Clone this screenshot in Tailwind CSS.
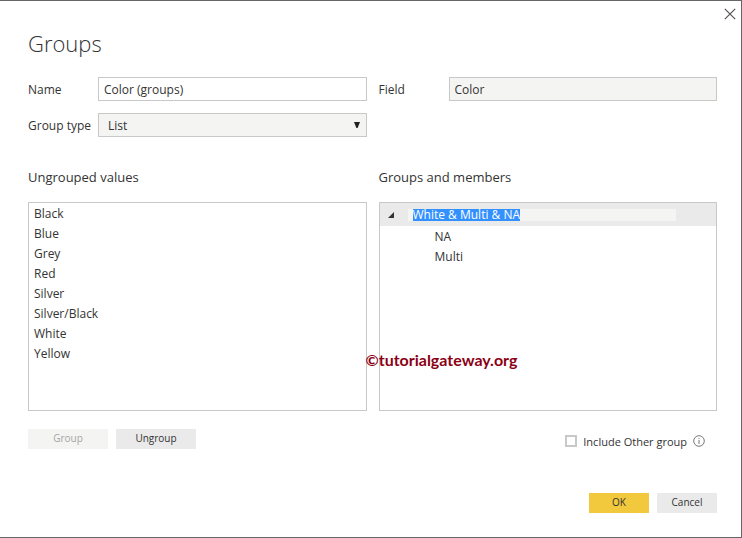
<!DOCTYPE html>
<html lang="en">
<head>
    <meta charset="UTF-8">
    <meta name="viewport" content="width=device-width, initial-scale=1.0">
    <title>Groups</title>
    <script src="https://cdn.jsdelivr.net/npm/@tailwindcss/browser@4"></script>
</head>
<body class="bg-white font-['Open_Sans','Noto_Sans',sans-serif] text-xs text-[#333333]">
    <div class="relative min-h-screen flex flex-col border-t border-r border-b border-[#666666] pt-6 pb-6 pl-7 pr-6">
        <button type="button" aria-label="Close" class="absolute top-[7px] right-[5px] w-3 h-3">
            <svg viewBox="0 0 12 12" class="w-3 h-3" fill="none" stroke="#5a5055" stroke-width="1.2">
                <path d="M0.8 0.8L11.2 11.2M11.2 0.8L0.8 11.2"/>
            </svg>
        </button>

        <h1 class="text-[22px] leading-9 font-light">Groups</h1>

        <form id="groupsForm" class="flex-1 flex flex-col">
            <div class="grid grid-cols-2 gap-3 mt-4">
                <div class="flex items-center">
                    <label for="name" class="w-[70px] shrink-0 pt-0.5">Name</label>
                    <input type="text" id="name" name="name" value="Color (groups)"
                           class="flex-1 min-w-0 h-6 px-[5px] border border-[#c8c8c8] bg-white outline-none">
                </div>
                <div class="flex items-center">
                    <label for="field" class="w-[70px] shrink-0 pt-0.5">Field</label>
                    <input type="text" id="field" name="field" value="Color" readonly
                           class="flex-1 min-w-0 h-6 px-[5px] border border-[#c8c8c8] bg-[#f4f4f2] outline-none">
                </div>
                <div class="flex items-center">
                    <label for="groupType" class="w-[70px] shrink-0 pt-0.5 whitespace-nowrap">Group type</label>
                    <div class="relative flex-1">
                        <select id="groupType" name="groupType"
                                class="block w-full h-6 pt-0.5 pl-[9px] pr-6 appearance-none border border-[#c8c8c8] bg-[#f4f4f2] outline-none">
                            <option>List</option>
                            <option>Bin</option>
                        </select>
                        <svg viewBox="0 0 6 6" class="absolute right-[7px] top-[9px] w-[6px] h-[6px] pointer-events-none" fill="#222222">
                            <path d="M0 0H6L3.6 6H2.4Z"/>
                        </svg>
                    </div>
                </div>
            </div>

            <div class="flex-1 grid grid-cols-2 grid-rows-[auto_1fr] gap-x-3 gap-y-[13px] mt-7">
                <h2 class="text-[13px] leading-6">Ungrouped values</h2>
                <h2 class="text-[13px] leading-6">Groups and members</h2>

                <ul class="border border-[#c8c8c8] px-[5px] py-px leading-5">
                    <li>Black</li>
                    <li>Blue</li>
                    <li>Grey</li>
                    <li>Red</li>
                    <li>Silver</li>
                    <li>Silver/Black</li>
                    <li>White</li>
                    <li>Yellow</li>
                </ul>

                <div class="relative border border-[#c8c8c8]">
                    <div class="flex items-center h-[23px] pl-2 pr-10 bg-[#eaeaea]">
                        <svg viewBox="0 0 6 6" class="w-[6px] h-[6px] mr-[14px]" fill="#333333">
                            <path d="M6 0V6H0Z"/>
                        </svg>
                        <div class="flex-1 h-3 pl-[5px] bg-[#f4f4f2] leading-3">
                            <span class="inline-block h-3 bg-[#3390ff] text-white">White &amp; Multi &amp; NA</span>
                        </div>
                    </div>
                    <ul class="pl-[55px] pt-px leading-5">
                        <li>NA</li>
                        <li>Multi</li>
                    </ul>
                    <p class="absolute -left-[14px] bottom-10 text-base leading-5 font-bold text-[#8b0014] font-[Lato,sans-serif]">©tutorialgateway.org</p>
                </div>
            </div>

            <div class="flex items-start justify-between mt-[18px]">
                <div class="flex gap-2 text-[10px]">
                    <button type="button" disabled class="w-20 h-5 bg-[#f4f4f2] text-[#a6a6a6]">Group</button>
                    <button type="button" class="w-20 h-5 bg-[#eaeaea]">Ungroup</button>
                </div>
                <div class="flex items-center h-6 pr-3">
                    <input type="checkbox" id="includeOther" name="includeOther"
                           class="appearance-none w-3 h-3 mr-[6px] border-2 border-[#c8c8c8] bg-white">
                    <label for="includeOther" class="text-[11px] pt-0.5">Include Other group</label>
                    <svg viewBox="0 0 12 12" class="w-3 h-3 ml-[6px]" fill="none" stroke="#555555" stroke-width="0.8">
                        <circle cx="6" cy="6" r="5.3"/>
                        <path d="M6 5V9M6 3V4"/>
                    </svg>
                </div>
            </div>

            <div class="flex justify-end gap-2 mt-10 text-[10px]">
                <button type="submit" class="w-15 h-5 bg-[#f2c83d]">OK</button>
                <button type="button" class="w-15 h-5 bg-[#eaeaea]">Cancel</button>
            </div>
        </form>
    </div>
</body>
</html>
